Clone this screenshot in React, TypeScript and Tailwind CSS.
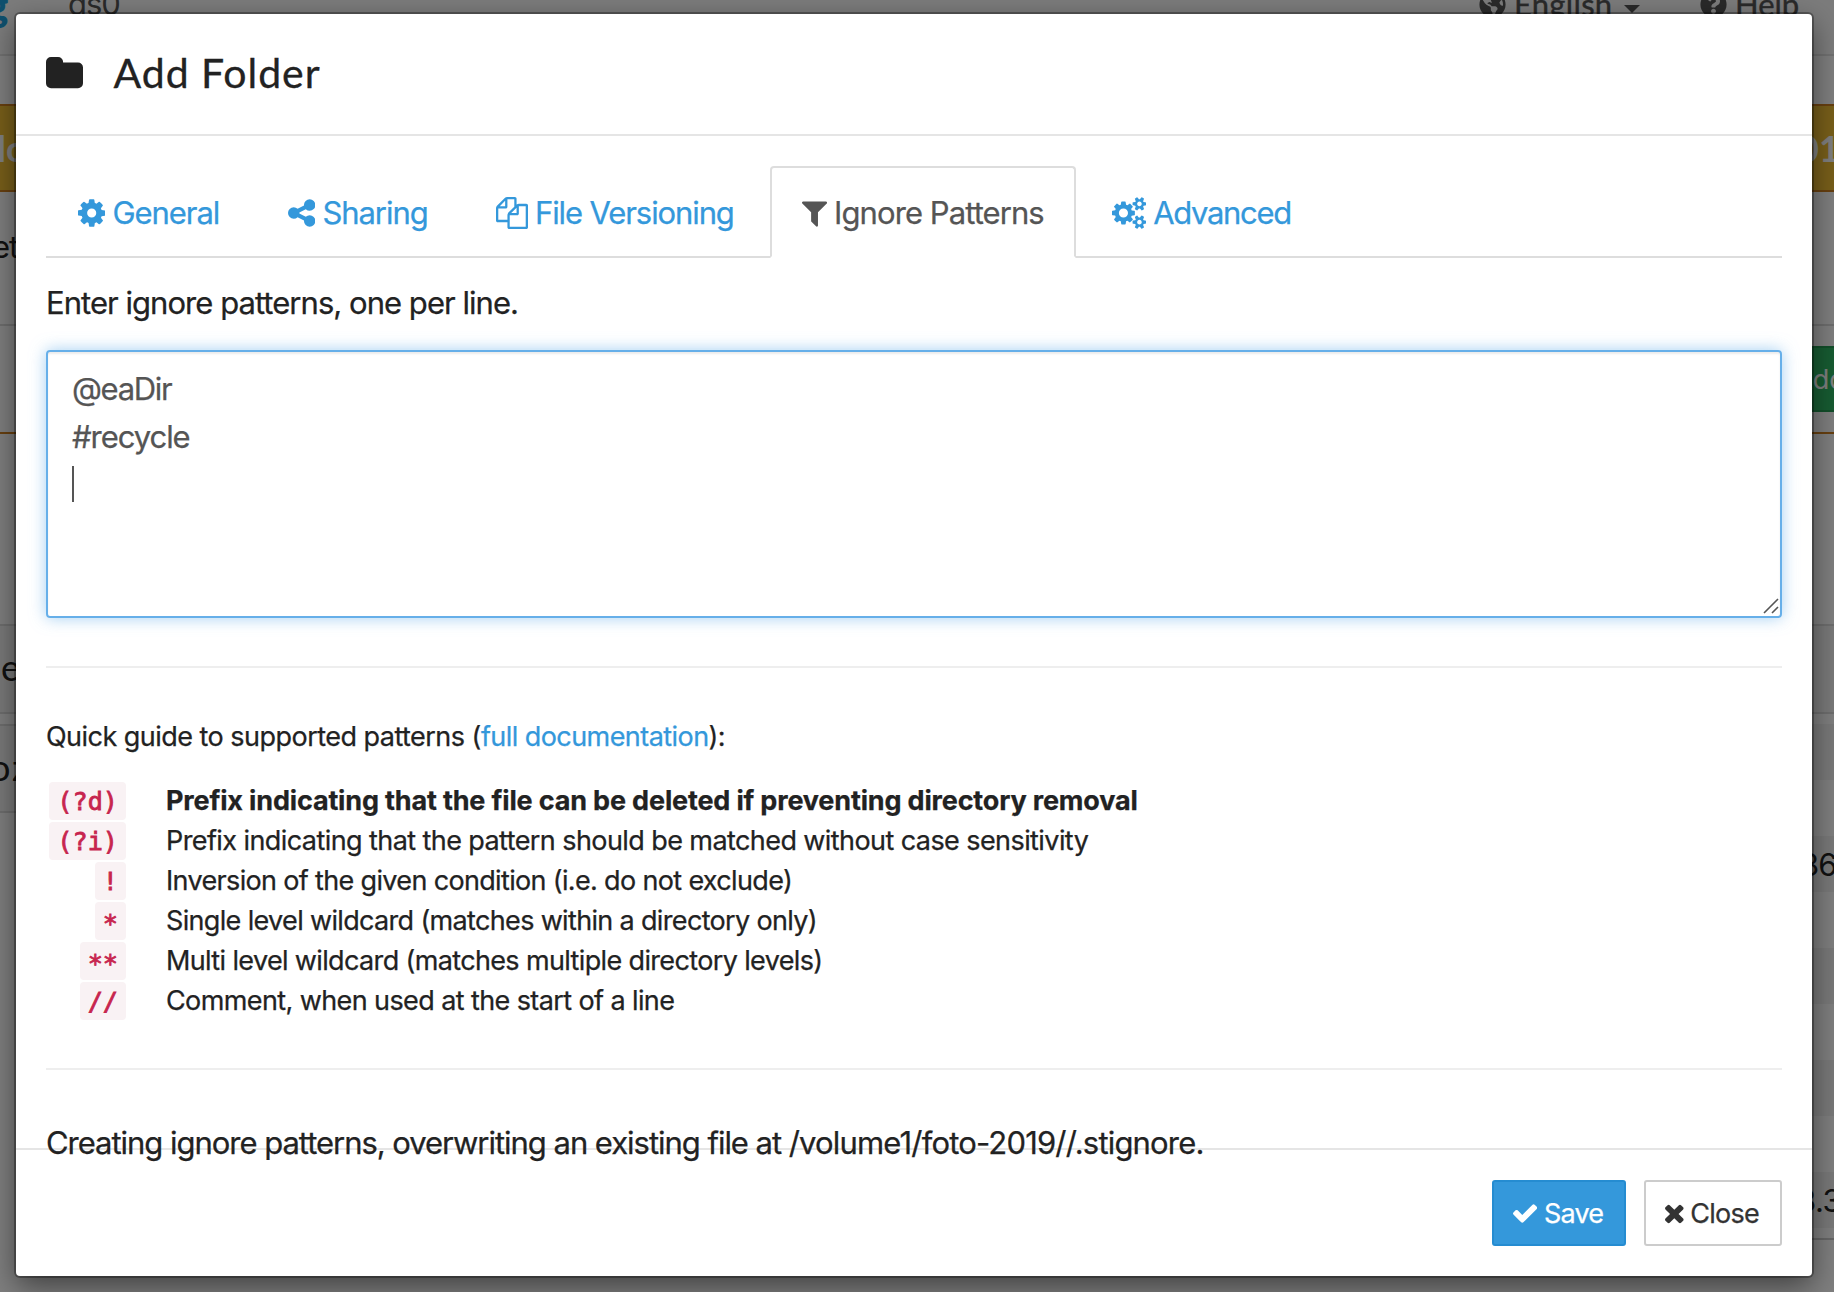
import type { ReactNode } from "react";
import { FaGlobeAmericas, FaQuestionCircle } from "react-icons/fa";

const PATHS = {
  folder:
    "M1728 608v704q0 92-66 158t-158 66h-1216q-92 0-158-66t-66-158v-960q0-92 66-158t158-66h320q92 0 158 66t66 158v32h672q92 0 158 66t66 158z",
  cog: "M1152 896q0-106-75-181t-181-75-181 75-75 181 75 181 181 75 181-75 75-181zm512-109v222q0 12-8 23t-20 13l-185 28q-19 54-39 91 35 50 107 138 10 12 10 25t-9 23q-27 37-99 108t-94 71q-12 0-26-9l-138-108q-44 23-91 38-16 136-29 186-7 28-36 28h-222q-14 0-24.500-8.500t-11.500-21.500l-28-184q-49-16-90-37l-141 107q-10 9-25 9-14 0-25-11-126-114-165-168-7-10-7-23 0-12 8-23 15-21 51-66.500t54-70.500q-27-50-41-99l-183-27q-13-2-21-12.500t-8-23.500v-222q0-12 8-23t19-13l186-28q14-46 39-92-40-57-107-138-10-12-10-24 0-10 9-23 26-36 98.500-107.500t94.500-71.500q13 0 26 10l138 107q44-23 91-38 16-136 29-186 7-28 36-28h222q14 0 24.500 8.500t11.500 21.500l28 184q49 16 90 37l142-107q9-9 24-9 13 0 25 10 129 119 165 170 7 8 7 22 0 12-8 23-15 21-51 66.500t-54 70.500q26 50 41 98l183 28q13 2 21 12.500t8 23.500z",
  share:
    "M1344 1024q133 0 226.500 93.500t93.500 226.500-93.500 226.500-226.500 93.500-226.500-93.500-93.500-226.500q0-12 2-34l-360-180q-92 86-218 86-133 0-226.500-93.500t-93.500-226.500 93.500-226.500 226.500-93.500q126 0 218 86l360-180q-2-22-2-34 0-133 93.500-226.500t226.500-93.500 226.500 93.500 93.500 226.500-93.500 226.500-226.500 93.500q-126 0-218-86l-360 180q2 22 2 34t-2 34l360 180q92-86 218-86z",
  files:
    "M1696 384q40 0 68 28t28 68v1216q0 40-28 68t-68 28h-960q-40 0-68-28t-28-68v-288h-544q-40 0-68-28t-28-68v-672q0-40 20-88t48-76l408-408q28-28 76-48t88-20h416q40 0 68 28t28 68v328q68-40 128-40h416zm-544 213l-299 299h299v-299zm-640-384l-299 299h299v-299zm196 647l316-316v-416h-384v416q0 40-28 68t-68 28h-416v640h512v-256q0-40 20-88t48-76zm956 804v-1152h-384v416q0 40-28 68t-68 28h-416v640h896z",
  filter:
    "M1595 295q17 41-14 70l-493 493v742q0 42-39 59-13 5-25 5-27 0-45-19l-256-256q-19-19-19-45v-486l-493-493q-31-29-14-70 17-39 59-39h1280q42 0 59 39z",
  cogs: "M832 896q0-106-75-181t-181-75-181 75-75 181 75 181 181 75 181-75 75-181zm768 512q0-52-38-90t-90-38-90 38-38 90q0 53 37.500 90.500t90.500 37.500 90.500-37.500 37.500-90.500zm0-1024q0-52-38-90t-90-38-90 38-38 90q0 53 37.500 90.500t90.500 37.500 90.500-37.500 37.500-90.500zm-384 421v185q0 10-7 19.500t-16 10.500l-155 24q-11 35-32 76 34 48 90 115 7 11 7 20 0 12-7 19-23 30-82.500 89.500t-78.500 59.500q-11 0-21-7l-115-90q-37 19-77 31-11 108-23 155-7 24-30 24h-186q-11 0-20-7.500t-10-17.500l-23-153q-34-10-75-31l-118 89q-7 7-20 7-11 0-21-8-144-133-144-160 0-9 7-19 10-14 41-53t47-61q-23-44-35-82l-152-24q-10-1-17-9.500t-7-19.500v-185q0-10 7-19.500t16-10.500l155-24q11-35 32-76-34-48-90-115-7-11-7-20 0-12 7-20 22-30 82-89t79-59q11 0 21 7l115 90q34-18 77-32 11-108 23-154 7-24 30-24h186q11 0 20 7.500t10 17.500l23 153q34 10 75 31l118-89q8-7 20-7 11 0 21 8 144 133 144 160 0 8-7 19-12 16-42 54t-45 60q23 48 34 82l152 23q10 2 17 10.500t7 19.500zm640 533v140q0 16-149 31-12 27-30 52 51 113 51 138 0 4-4 7-122 71-124 71-8 0-46-47t-52-68q-20 2-30 2t-30-2q-14 21-52 68t-46 47q-2 0-124-71-4-3-4-7 0-25 51-138-18-25-30-52-149-15-149-31v-140q0-16 149-31 13-29 30-52-51-113-51-138 0-4 4-7 4-2 35-20t59-34 30-16q8 0 46 46.500t52 67.500q20-2 30-2t30 2q51-71 92-112l6-2q4 0 124 70 4 3 4 7 0 25-51 138 17 23 30 52 149 15 149 31zm0-1024v140q0 16-149 31-12 27-30 52 51 113 51 138 0 4-4 7-122 71-124 71-8 0-46-47t-52-68q-20 2-30 2t-30-2q-14 21-52 68t-46 47q-2 0-124-71-4-3-4-7 0-25 51-138-18-25-30-52-149-15-149-31v-140q0-16 149-31 13-29 30-52-51-113-51-138 0-4 4-7 4-2 35-20t59-34 30-16q8 0 46 46.500t52 67.500q20-2 30-2t30 2q51-71 92-112l6-2q4 0 124 70 4 3 4 7 0 25-51 138 17 23 30 52 149 15 149 31z",
  check:
    "M1671 566q0 40-28 68l-724 724-136 136q-28 28-68 28t-68-28l-136-136-362-362q-28-28-28-68t28-68l136-136q28-28 68-28t68 28l294 295 656-657q28-28 68-28t68 28l136 136q28 28 28 68z",
  times:
    "M1490 1322q0 40-28 68l-136 136q-28 28-68 28t-68-28l-294-294-294 294q-28 28-68 28t-68-28l-136-136q-28-28-28-68t28-68l294-294-294-294q-28-28-28-68t28-68l136-136q28-28 68-28t68 28l294 294 294-294q28-28 68-28t68 28l136 136q28 28 28 68t-28 68l-294 294 294 294q28 28 28 68z",
};

function Icon({ name, box, className }: { name: keyof typeof PATHS; box: string; className: string }) {
  return (
    <svg viewBox={box} className={`shrink-0 ${className}`} fill="currentColor" aria-hidden="true">
      <path d={PATHS[name]} />
    </svg>
  );
}

function Tab({ icon, label, className, active }: { icon: ReactNode; label: string; className: string; active?: boolean }) {
  return (
    <li
      className={`-mb-0.5 mr-1 flex h-[92px] items-center gap-[7px] whitespace-nowrap rounded-t-sm border-2 pl-[30px] pt-px ${
        active ? "border-[#ddd] border-b-white bg-white text-[#555]" : "border-transparent text-[#3498db]"
      } ${className}`}
    >
      {icon}
      <span className="pt-px leading-[48px]">{label}</span>
    </li>
  );
}

const GUIDE = [
  { code: "(?d)", text: "Prefix indicating that the file can be deleted if preventing directory removal", cls: "font-bold tracking-[-0.166px]", lead: "leading-[39px]" },
  { code: "(?i)", text: "Prefix indicating that the pattern should be matched without case sensitivity", cls: "tracking-[-0.58px]", lead: "leading-[39px]" },
  { code: "!", text: "Inversion of the given condition (i.e. do not exclude)", cls: "tracking-[-0.66px]", lead: "leading-[39px]" },
  { code: "*", text: "Single level wildcard (matches within a directory only)", cls: "tracking-[-0.66px]", lead: "leading-[44px]" },
  { code: "**", text: "Multi level wildcard (matches multiple directory levels)", cls: "tracking-[-0.64px]", lead: "leading-[44px]" },
  { code: "//", text: "Comment, when used at the start of a line", cls: "tracking-[-0.6px]", lead: "leading-[39px]" },
];

function PageBehind() {
  return (
    <div className="h-full text-[31px] text-[#222]">
      <nav className="-mt-[46px] flex h-[102px] items-center border-b-2 border-[#e2e2e2] bg-[#f8f8f8] pt-px font-[Lato,sans-serif] text-[#555]">
        <span className="-ml-[14px] w-[82px] text-[42px] font-black leading-none text-[#1ea0dc]">g</span>
        <span className="font-[Inter,sans-serif] tracking-[-1px]">ds0</span>
        <div className="ml-auto flex items-center pr-[36px]">
          <FaGlobeAmericas className="mr-2 size-[27px]" />
          <span className="w-[110px] tracking-[0.3px] [-webkit-text-stroke:0.4px]">English</span>
          <span className="mr-[60px] mt-2 border-x-8 border-t-8 border-x-transparent border-t-[#555]" />
          <FaQuestionCircle className="mr-2 size-[27px]" />
          <span className="w-[63px] [-webkit-text-stroke:0.4px]">Help</span>
        </div>
      </nav>

      <div className="flex justify-between">
        <div className="w-16 overflow-hidden whitespace-nowrap font-[Inter,sans-serif]">
          <div className="mt-12 flex h-[88px] items-center border-y-2 border-[#d08020] bg-[#f0bf34] font-[Lato,sans-serif] text-[36px] font-bold text-white">
            <span className="-ml-[3px]">lo</span>
          </div>
          <div className="mt-[26px] h-[106px] pt-[5px] leading-[48px]">
            <span className="-ml-2 tracking-[-1px]">et</span>
          </div>
          <div className="border-t-2 border-[#ddd]" />
          <div className="mt-[106px] border-t-2 border-[#d08020]" />
          <div className="mt-[190px] flex h-[90px] items-center border-y-2 border-[#ddd] bg-[#f5f5f5] pb-[5px] font-[Lato,sans-serif] text-[36px]">
            <span className="ml-px">e</span>
          </div>
          <div className="mt-2.5 flex h-[89px] items-center border-y-2 border-[#ddd] bg-[#f5f5f5] pb-1 font-[Lato,sans-serif] text-[36px]">
            <span className="-ml-2.5 tracking-[2px]">oz</span>
          </div>
        </div>

        <div className="w-8 overflow-hidden whitespace-nowrap font-[Inter,sans-serif]">
          <div className="mt-12 flex h-[88px] items-center border-y-2 border-[#d08020] bg-[#f0bf34] font-[Lato,sans-serif] text-[36px] font-bold text-white">
            <span className="-ml-1">01</span>
          </div>
          <div className="mt-[132px] border-t-2 border-[#ddd]" />
          <div className="mt-5 flex h-[66px] items-center border-y-2 border-[#249f55] bg-[#2eb865] pt-[3px] text-[27px] text-white">
            <span className="-ml-2">Add</span>
          </div>
          <div className="mt-5 border-t-2 border-[#d08020]" />
          <div className="mt-[190px] h-[90px] border-y-2 border-[#ddd] bg-[#f5f5f5]" />
          <div className="mt-2.5 h-14 bg-[#f3f3f3]" />
          <div className="mt-14 flex h-14 items-center bg-[#f3f3f3] pt-[3px]">
            <span className="-ml-[2px] tracking-[-1px]">86</span>
          </div>
          <div className="mt-14 h-14 bg-[#f3f3f3]" />
          <div className="mt-14 h-14 bg-[#f3f3f3]" />
          <div className="mt-14 flex h-14 items-center bg-[#f3f3f3] pt-[3px]">
            <span className="-ml-[5px] tracking-[-0.5px]">3.3</span>
          </div>
          <div className="mt-2.5 border-t-2 border-[#ccc]" />
        </div>
      </div>
    </div>
  );
}

export default function App() {
  return (
    <div className="relative h-[1292px] w-[1834px] overflow-hidden bg-white">
      <PageBehind />
      <div className="absolute inset-0 bg-black/50" />

      <div
        role="dialog"
        className="absolute left-4 top-3.5 flex h-[1262px] w-[1796px] flex-col rounded-[4px] bg-white font-[Inter,sans-serif] text-[31px] text-[#222] shadow-[0_0_0_2px_rgba(0,0,0,0.3),0_10px_30px_rgba(0,0,0,0.5)] [-webkit-text-stroke:0.25px]"
      >
        <header className="flex h-[122px] shrink-0 items-center border-b-2 border-[#e5e5e5] pl-[30px]">
          <Icon name="folder" box="64 0 1664 1792" className="h-10 w-[37px]" />
          <h4 className="ml-[30.5px] pb-0.5 font-[Lato,sans-serif] text-[41px] leading-[44px] tracking-[0.95px] [-webkit-text-stroke:0.3px]">
            Add Folder
          </h4>
        </header>

        <div className="h-[1012px] shrink-0 px-[30px] pt-[30px]">
          <ul className="flex h-[92px] border-b-2 border-[#ddd]">
            <Tab label="General" className="w-[206px] tracking-[-1.05px]" icon={<Icon name="cog" box="128 0 1536 1792" className="h-8 w-[27.4px]" />} />
            <Tab label="Sharing" className="w-[204px] tracking-[-1.05px]" icon={<Icon name="share" box="128 0 1536 1792" className="h-8 w-[27.4px]" />} />
            <Tab label="File Versioning" className="w-[302px] tracking-[-1.1px]" icon={<Icon name="files" box="0 0 1792 1792" className="size-8" />} />
            <Tab active label="Ignore Patterns" className="w-[306px] tracking-[-0.92px]" icon={<Icon name="filter" box="192 0 1408 1792" className="h-8 w-[25.1px]" />} />
            <Tab label="Advanced" className="w-[240px] tracking-[-1.35px]" icon={<Icon name="cogs" box="-64 0 1920 1792" className="h-8 w-[34.3px]" />} />
          </ul>

          <p className="mt-[21px] leading-[48px] tracking-[-0.96px]">Enter ignore patterns, one per line.</p>

          <div className="relative mt-[23px] h-[268px] rounded-[4px] border-2 border-[#66afe9] px-6 py-[13px] leading-[48px] text-[#555] shadow-[inset_0_2px_2px_rgba(0,0,0,0.075),0_0_16px_rgba(102,175,233,0.6)]">
            <div className="tracking-[-1.34px]">@eaDir</div>
            <div className="tracking-[-1.06px]">#recycle</div>
            <div className="mt-[5px] h-9 w-0.5 bg-[#555]" />
            <svg viewBox="0 0 16 16" className="absolute bottom-0.5 right-px size-4" stroke="#555" strokeWidth="1.6">
              <path d="M1 15 15 1M9 15 15 9" />
            </svg>
          </div>

          <hr className="mt-12 border-t-2 border-[#eee]" />

          <p className="mt-[49px] whitespace-nowrap text-[27px] leading-10 tracking-[-0.53px]">
            Quick guide to supported patterns (<a className="tracking-[-0.56px] text-[#3498db]">full documentation</a>):
          </p>

          <dl className="mt-[23px] text-[27px] leading-10">
            {GUIDE.map((g) => (
              <div key={g.code} className="flex h-10">
                <dt className="flex w-20 justify-end pt-0.5">
                  <code
                    className={`h-[38px] rounded-[4px] bg-[#f9f2f4] px-2 font-['DejaVu_Sans_Mono',monospace] text-[25.2px] text-[#c7254e] [-webkit-text-stroke:0.8px] ${g.lead}`}
                  >
                    {g.code}
                  </code>
                </dt>
                <dd className={`ml-10 whitespace-nowrap pt-px ${g.cls}`}>{g.text}</dd>
              </div>
            ))}
          </dl>

          <hr className="mt-12 border-t-2 border-[#eee]" />

          <p className="relative z-10 mt-[49px] whitespace-nowrap leading-[48px] tracking-[-1.03px]">
            Creating ignore patterns, overwriting an existing file at{" "}
            <span className="tracking-[-0.83px]">/volume1/foto-2019//.stignore.</span>
          </p>
        </div>

        <footer className="flex h-[128px] shrink-0 justify-end gap-[18px] border-t-2 border-[#e5e5e5] px-[30px] pt-[30px] text-[27px]">
          <button className="flex h-[66px] w-[134px] items-center gap-[6.5px] rounded-[3px] border-2 border-[#258cd1] bg-[#3498db] pl-[19.3px] tracking-[-0.8px] text-white">
            <Icon name="check" box="121 0 1550 1792" className="h-7 w-[24.2px]" />
            <span className="pt-[3px]">Save</span>
          </button>
          <button className="flex h-[66px] w-[138px] items-center gap-[6.3px] rounded-[3px] border-2 border-[#ccc] bg-white pl-[19.3px] tracking-[-0.75px] text-[#333]">
            <Icon name="times" box="302 0 1188 1792" className="h-7 w-[18.6px]" />
            <span className="pt-[3px]">Close</span>
          </button>
        </footer>
      </div>
    </div>
  );
}
